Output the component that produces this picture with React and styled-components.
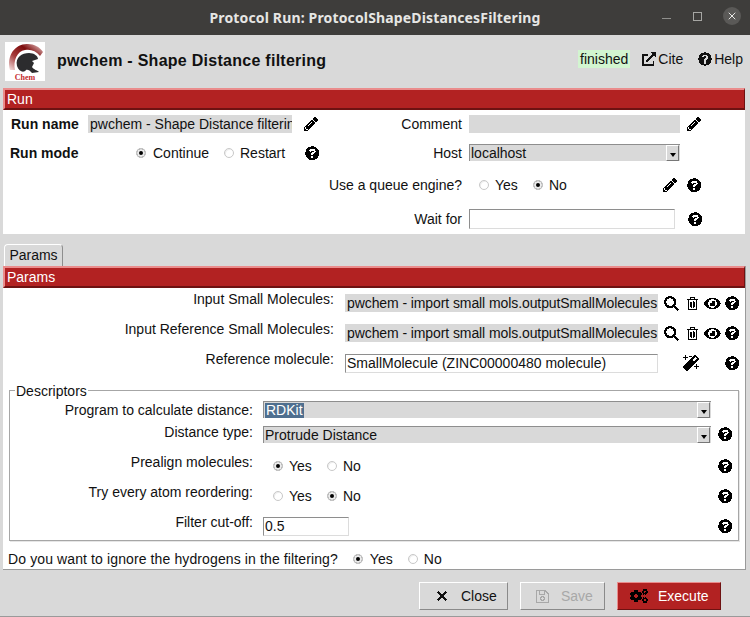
import React from 'react';
import styled, { createGlobalStyle } from 'styled-components';
import {
  FaPencilAlt,
  FaQuestionCircle,
  FaSearch,
  FaRegTrashAlt,
  FaEye,
  FaMagic,
  FaExternalLinkAlt,
  FaTimes,
  FaRegSave,
  FaCogs,
} from 'react-icons/fa';
import { X } from 'lucide-react';

const GlobalStyle = createGlobalStyle`
  html, body { margin: 0; padding: 0; background: #d9d9d9; }
  body { font-family: "Liberation Sans", Arial, sans-serif; font-size: 14px; color: #111; }
  * { box-sizing: border-box; }
  svg.crisp { shape-rendering: crispEdges; }
`;

const Window = styled.div`
  width: 750px;
  height: 617px;
  overflow: hidden;
  background: #d9d9d9;
  display: flex;
  flex-direction: column;
`;

const TitleBar = styled.div`
  height: 35px;
  flex: none;
  background: #3e3d3b;
  display: flex;
  align-items: center;
  justify-content: center;
  position: relative;
  color: #e6e6e4;
  font-family: "Noto Sans", "Open Sans", sans-serif;
  font-weight: 700;
  font-size: 14px;
  letter-spacing: 0.15px;
`;

const WindowControls = styled.div`
  position: absolute;
  right: 9px;
  top: 7px;
  display: flex;
  align-items: center;
  gap: 20px;
  height: 18px;
`;

const MinButton = styled.span`
  width: 9px;
  height: 1px;
  margin-top: 5px;
  background: #8f8f8c;
`;

const MaxButton = styled.span`
  width: 9px;
  height: 9px;
  margin-left: 2px;
  margin-right: 1px;
  border: 1px solid #a6a6a3;
`;

const CloseButton = styled.span`
  width: 18px;
  height: 18px;
  border-radius: 50%;
  background: #5a5957;
  color: #e8e8e6;
  display: flex;
  align-items: center;
  justify-content: center;
`;

const Header = styled.div`
  height: 53px;
  flex: none;
  display: flex;
  align-items: center;
  padding: 0 7px 0 5px;
`;

const Logo = styled.svg`
  width: 40px;
  height: 39px;
  flex: none;
  background: #fff;
`;

const AppName = styled.div`
  margin: 0 0 2px 12px;
  font-weight: 700;
  font-size: 16px;
  letter-spacing: 0.27px;
  flex: 1;
`;

const StatusBadge = styled.span`
  background: #d2f5d0;
  height: 18px;
  line-height: 18px;
  padding: 0 2px;
  margin: 0 12px 6px 0;
`;

const HeaderLink = styled.span`
  display: flex;
  align-items: center;
  gap: 2px;
  margin-left: ${(p) => p.$gap || 0}px;
  margin-bottom: 6px;
`;

const Panel = styled.div`
  margin: 0 ${(p) => p.$right || 5}px 0 3px;
  background: #fff;
  height: ${(p) => p.$height}px;
  flex: none;
  border-bottom: ${(p) => (p.$line ? '1px solid #9a9a9a' : 'none')};
  border-right: ${(p) => (p.$line ? '1px solid #9a9a9a' : 'none')};
`;

const SectionBar = styled.div`
  height: 22px;
  background: #b22222;
  color: #fff;
  border-top: 2px solid #ea8c8c;
  border-left: 2px solid #ea8c8c;
  border-bottom: 2px solid #6e1212;
  border-right: 1px solid #6e1212;
  padding-left: 2px;
  line-height: 18px;
`;

const RunRow = styled.div`
  display: flex;
  align-items: center;
  height: ${(p) => p.$height}px;
  margin-top: ${(p) => p.$top || 0}px;
`;

const LeftHalf = styled.div`
  width: 322px;
  flex: none;
  display: flex;
  align-items: center;
`;

const BoldLabel = styled.span`
  font-weight: 700;
  width: 85px;
  flex: none;
  padding-left: ${(p) => p.$inset || 7}px;
`;

const RightLabel = styled.span`
  width: ${(p) => p.$width}px;
  flex: none;
  text-align: right;
  white-space: nowrap;
  position: relative;
  top: ${(p) => p.$lift || 0}px;
`;

const ReadOnly = styled.div`
  width: ${(p) => p.$width}px;
  height: 18px;
  line-height: 18px;
  margin-left: ${(p) => p.$left || 0}px;
  background: #d9d9d9;
  padding-left: 2px;
  flex: none;
  overflow: hidden;
  white-space: nowrap;
  letter-spacing: ${(p) => (p.$tight ? '-0.09px' : 'normal')};
`;

const Entry = styled.div`
  width: ${(p) => p.$width}px;
  height: ${(p) => p.$height || 20}px;
  line-height: 17px;
  margin-left: ${(p) => p.$left || 0}px;
  background: #fff;
  border: 1px solid #dcdcdc;
  border-top-color: #8e8e8e;
  border-left-color: #8e8e8e;
  box-shadow: inset 1px 1px 0 #fff;
  padding-left: 1px;
  flex: none;
  overflow: hidden;
  white-space: nowrap;
`;

const Select = styled.div`
  width: ${(p) => p.$width}px;
  height: 17px;
  margin-left: ${(p) => p.$left || 0}px;
  align-self: flex-start;
  background: #d9d9d9;
  border-top: 1px solid #8e8e8e;
  border-left: 1px solid #8e8e8e;
  flex: none;
  display: flex;
  align-items: center;
  justify-content: space-between;
  line-height: 16px;
  padding-left: 1px;
`;

const SelectArrow = styled.span`
  width: 13px;
  height: 16px;
  margin-right: 1px;
  background: #d9d9d9;
  border: 1px solid #fff;
  border-right-color: #777;
  border-bottom-color: #777;
  display: flex;
  flex-direction: column;
  align-items: center;
  justify-content: center;
  &::before {
    content: '';
    margin-top: 3px;
    border-top: 4px solid #000;
    border-left: 3px solid transparent;
    border-right: 3px solid transparent;
  }
`;

const SelectedText = styled.span`
  background: #4f6f8f;
  color: #fff;
  line-height: 15px;
  padding: 0 1px;
`;

const RadioGroup = styled.div`
  display: flex;
  align-items: center;
  margin-left: ${(p) => p.$left || 0}px;
  flex: none;
`;

const RadioItem = styled.label`
  display: flex;
  align-items: center;
  gap: ${(p) => p.$gap || 6}px;
  width: ${(p) => p.$width}px;
  flex: none;
`;

const RadioDot = styled.span`
  width: 10px;
  height: 10px;
  flex: none;
  border-radius: 50%;
  border: 1px solid #c8c8c8;
  background: ${(p) => (p.$on ? '#000' : '#fff')};
  box-shadow: ${(p) => (p.$on ? 'inset 0 0 0 2px #ececec' : 'inset 1px 1px 0 #eee')};
`;

const IconSlot = styled.span`
  display: flex;
  align-items: center;
  justify-content: center;
  width: ${(p) => p.$width || 16}px;
  margin-left: ${(p) => p.$left || 0}px;
  flex: none;
  color: ${(p) => p.$color || '#000'};
`;

const TabStrip = styled.div`
  height: 22px;
  margin-top: 10px;
  padding-left: 4px;
  flex: none;
`;

const Tab = styled.div`
  width: 59px;
  height: 22px;
  border: 1px solid #8e8e8e;
  border-bottom: none;
  border-top-color: #fff;
  border-left-color: #fff;
  border-radius: 4px 4px 0 0;
  text-align: center;
  line-height: 20px;
`;

const ParamsBody = styled.div`
  padding: 6px 0 0;
`;

const ParamRow = styled.div`
  display: flex;
  align-items: center;
  height: 18px;
  & + & {
    margin-top: 12px;
  }
`;

const Descriptors = styled.fieldset`
  margin: 10px 6px 0;
  padding: 3px 0 0;
  height: 159px;
  border: 1px solid #a6a6a6;
  box-shadow: 1px 1px 0 #e6e6e6;
`;

const DescriptorsTitle = styled.legend`
  margin-left: 5px;
  padding: 0 1px;
  line-height: 16px;
  position: relative;
  top: 1px;
`;

const DescRow = styled.div`
  display: flex;
  align-items: center;
  height: ${(p) => p.$height || 18}px;
  margin-bottom: ${(p) => p.$gap || 0}px;
`;

const Question = styled.div`
  display: flex;
  align-items: center;
  height: 20px;
  margin-top: 8px;
  padding-left: 5px;
`;

const QuestionText = styled.span`
  letter-spacing: 0.115px;
`;

const Footer = styled.div`
  flex: none;
  display: flex;
  align-items: flex-start;
  gap: 12px;
  margin-top: 12px;
  padding-left: 419px;
  height: 35px;
  border-bottom: 1px solid #9a9a9a;
`;

const Button = styled.div`
  width: ${(p) => p.$width}px;
  height: 28px;
  display: flex;
  align-items: center;
  padding-left: ${(p) => p.$pad || 14}px;
  gap: ${(p) => p.$gap || 14}px;
  background: ${(p) => p.$bg || '#d9d9d9'};
  color: ${(p) => p.$color || '#111'};
  border: 1px solid ${(p) => p.$light || '#fff'};
  border-right-color: ${(p) => p.$dark || '#8a8a8a'};
  border-bottom-color: ${(p) => p.$dark || '#8a8a8a'};
`;

const Pencil = () => <FaPencilAlt className="crisp" size={14} />;
const Help = () => <FaQuestionCircle className="crisp" size={14.5} />;

const Radio = ({ on, label, width, gap }) => (
  <RadioItem $width={width} $gap={gap}>
    <RadioDot $on={on} />
    {label}
  </RadioItem>
);

const ChemLogo = () => (
  <Logo viewBox="0 0 40 39">
    <defs>
      <linearGradient id="arc" x1="1" y1="0" x2="0" y2="1">
        <stop offset="0" stopColor="#f3d6d6" />
        <stop offset="0.35" stopColor="#7d0d0d" />
        <stop offset="0.65" stopColor="#a53a3a" />
        <stop offset="1" stopColor="#f4e2e2" />
      </linearGradient>
    </defs>
    <path d="M5 28 C1 13 11 1 23 2 C29 2 35 5 38 10 L35 14 C31 9 26 7 20 8 C12 9 8 19 10 28 Z" fill="url(#arc)" />
    <path d="M12 24 C10 15 17 11 24 11 C29 11 33 14 33 17 L27 19 L29 21 L27 25 C29 28 32 28 34 30 L27 31 C25 28 22 27 21 28 C19 31 14 30 12 24 Z" fill="#2c2c2e" />
    <text x="20" y="37.5" textAnchor="middle" fontFamily="Liberation Serif, serif" fontWeight="700" fontSize="8" fill="#c42a2a">
      Chem
    </text>
  </Logo>
);

const InputActions = () => (
  <>
    <IconSlot $left={5}><FaSearch className="crisp" size={15} /></IconSlot>
    <IconSlot $left={5}><FaRegTrashAlt className="crisp" size={13} /></IconSlot>
    <IconSlot $left={3} $width={18}><FaEye className="crisp" size={17} /></IconSlot>
    <IconSlot $left={3}><Help /></IconSlot>
  </>
);

const App = () => {
  return (
    <Window>
      <GlobalStyle />
      <TitleBar>
        Protocol Run: ProtocolShapeDistancesFiltering
        <WindowControls>
          <MinButton />
          <MaxButton />
          <CloseButton><X size={12} strokeWidth={2} /></CloseButton>
        </WindowControls>
      </TitleBar>

      <Header>
        <ChemLogo />
        <AppName>pwchem - Shape Distance filtering</AppName>
        <StatusBadge>finished</StatusBadge>
        <HeaderLink><FaExternalLinkAlt className="crisp" size={14} />Cite</HeaderLink>
        <HeaderLink $gap={15}><FaQuestionCircle className="crisp" size={14} />Help</HeaderLink>
      </Header>

      <Panel $height={146}>
        <SectionBar>Run</SectionBar>
        <RunRow $height={18} $top={5}>
          <LeftHalf>
            <BoldLabel $inset={8}>Run name</BoldLabel>
            <ReadOnly $width={204}>pwchem - Shape Distance filtering</ReadOnly>
            <IconSlot $left={11}><Pencil /></IconSlot>
          </LeftHalf>
          <RightLabel $width={137}>Comment</RightLabel>
          <ReadOnly $width={211} $left={7} />
          <IconSlot $left={6}><Pencil /></IconSlot>
        </RunRow>
        <RunRow $height={18} $top={11}>
          <LeftHalf>
            <BoldLabel>Run mode</BoldLabel>
            <RadioGroup $left={48}>
              <Radio on label="Continue" width={88} gap={7} />
              <Radio label="Restart" width={80} />
            </RadioGroup>
            <IconSlot><Help /></IconSlot>
          </LeftHalf>
          <RightLabel $width={137}>Host</RightLabel>
          <Select $width={211} $left={7}>localhost<SelectArrow /></Select>
        </RunRow>
        <RunRow $height={18} $top={14}>
          <LeftHalf />
          <RightLabel $width={137}>Use a queue engine?</RightLabel>
          <RadioGroup $left={17}>
            <Radio label="Yes" width={54} />
            <Radio on label="No" width={129} />
          </RadioGroup>
          <IconSlot><Pencil /></IconSlot>
          <IconSlot $left={8}><Help /></IconSlot>
        </RunRow>
        <RunRow $height={20} $top={15}>
          <LeftHalf />
          <RightLabel $width={137}>Wait for</RightLabel>
          <Entry $width={206} $left={7} />
          <IconSlot $left={12}><Help /></IconSlot>
        </RunRow>
      </Panel>

      <TabStrip><Tab>Params</Tab></TabStrip>

      <Panel $height={304} $right={4} $line>
        <SectionBar>Params</SectionBar>
        <ParamsBody>
          <ParamRow>
            <RightLabel $width={331} $lift={-4}>Input Small Molecules:</RightLabel>
            <ReadOnly $width={313} $left={11} $tight>pwchem - import small mols.outputSmallMolecules</ReadOnly>
            <InputActions />
          </ParamRow>
          <ParamRow>
            <RightLabel $width={331} $lift={-4}>Input Reference Small Molecules:</RightLabel>
            <ReadOnly $width={313} $left={11} $tight>pwchem - import small mols.outputSmallMolecules</ReadOnly>
            <InputActions />
          </ParamRow>
          <ParamRow>
            <RightLabel $width={331} $lift={-4}>Reference molecule:</RightLabel>
            <Entry $width={313} $height={19} $left={11}>SmallMolecule (ZINC00000480 molecule)</Entry>
            <IconSlot $left={25}><FaMagic className="crisp" size={16} /></IconSlot>
            <IconSlot $left={25}><Help /></IconSlot>
          </ParamRow>

          <Descriptors>
            <DescriptorsTitle>Descriptors</DescriptorsTitle>
            <DescRow $height={17} $gap={8}>
              <RightLabel $width={243}>Program to calculate distance:</RightLabel>
              <Select $width={448} $left={10}><SelectedText>RDKit</SelectedText><SelectArrow /></Select>
            </DescRow>
            <DescRow $height={17} $gap={14}>
              <RightLabel $width={243} $lift={-3}>Distance type:</RightLabel>
              <Select $width={448} $left={10}>Protrude Distance<SelectArrow /></Select>
              <IconSlot $left={6}><Help /></IconSlot>
            </DescRow>
            <DescRow $gap={12}>
              <RightLabel $width={243} $lift={-4}>Prealign molecules:</RightLabel>
              <RadioGroup $left={20}>
                <Radio on label="Yes" width={54} />
                <Radio label="No" width={390} />
              </RadioGroup>
              <IconSlot><Help /></IconSlot>
            </DescRow>
            <DescRow $gap={12}>
              <RightLabel $width={243} $lift={-4}>Try every atom reordering:</RightLabel>
              <RadioGroup $left={20}>
                <Radio label="Yes" width={54} />
                <Radio on label="No" width={390} />
              </RadioGroup>
              <IconSlot><Help /></IconSlot>
            </DescRow>
            <DescRow>
              <RightLabel $width={243} $lift={-4}>Filter cut-off:</RightLabel>
              <Entry $width={86} $height={19} $left={10}>0.5</Entry>
              <IconSlot $left={368}><Help /></IconSlot>
            </DescRow>
          </Descriptors>

          <Question>
            <QuestionText>Do you want to ignore the hydrogens in the filtering?</QuestionText>
            <RadioGroup $left={15}>
              <Radio on label="Yes" width={55} gap={7} />
              <Radio label="No" width={40} />
            </RadioGroup>
          </Question>
        </ParamsBody>
      </Panel>

      <Footer>
        <Button $width={89} $pad={15} $gap={12}>
          <FaTimes className="crisp" size={14} />
          Close
        </Button>
        <Button $width={85} $color="#a8a8a8" $gap={11}>
          <FaRegSave className="crisp" size={15} />
          Save
        </Button>
        <Button $width={104} $bg="#b22222" $color="#fff" $light="#ea8c8c" $dark="#6e1212" $pad={12} $gap={10}>
          <IconSlot $width={18} $color="#000"><FaCogs className="crisp" size={18} /></IconSlot>
          Execute
        </Button>
      </Footer>
    </Window>
  );
};

export default App;
